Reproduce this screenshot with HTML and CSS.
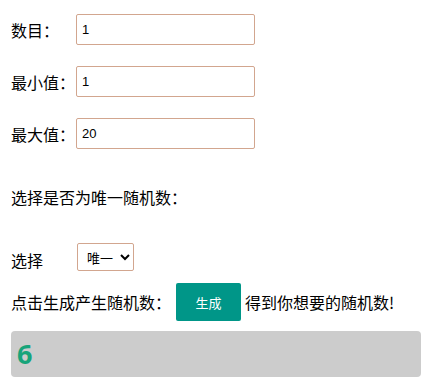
FILE: index.html
```html
<!DOCTYPE html>
<html lang="zh-CN">

<head>
    <meta charset="UTF-8">
    <meta name="viewport" content="width=device-width, initial-scale=1.0">
    <title>随机数生成</title>
    <link rel="stylesheet" href="styles.css">
</head>

<body>
    <div class="page">
        <div class="field">
            <label for="num">数目：</label>
            <input type="text" id="num" value="1">
        </div>
        <div class="field">
            <label for="min">最小值：</label>
            <input type="text" id="min" value="1">
        </div>
        <div class="field">
            <label for="max">最大值：</label>
            <input type="text" id="max" value="20">
        </div>

        <p class="hint">选择是否为唯一随机数：</p>

        <div class="field pick">
            <label for="only">选择</label>
            <select id="only">
                <option value="1">唯一</option>
                <option value="0">不唯一</option>
            </select>
        </div>

        <div class="action">
            <span>点击生成产生随机数：</span>
            <button id="make">生成</button>
            <span>得到你想要的随机数!</span>
        </div>

        <div class="result">6</div>
    </div>
</body>

</html>
```

FILE: styles.css
```css
body {
    margin: 0px;
    background: white;
    color: #000;
    font-family: "Noto Sans CJK SC", "Liberation Sans", sans-serif;
    font-size: 16px;
}

.page {
    padding: 14px 8px 0px 11px;
}

.field {
    display: flex;
    align-items: center;
    margin-bottom: 21px;
}

.field label {
    width: 65px;
    line-height: 22px;
}

.field input {
    box-sizing: border-box;
    width: 179px;
    height: 31px;
    padding: 0px 5px;
    border: 1px solid #d2a68f;
    border-radius: 2px;
    font-family: "Liberation Sans", Arial, sans-serif;
    font-size: 13px;
    outline: none;
}

.hint {
    margin: 37px 0px 35px 0px;
    line-height: 22px;
}

.pick {
    margin-bottom: 12px;
}

.pick label {
    width: 66px;
    padding-top: 5px;
}

.pick select {
    box-sizing: border-box;
    height: 28px;
    width: 57px;
    padding: 0px 2px 0px 5px;
    border: 1px solid #d2a68f;
    border-radius: 2px;
    background: white;
    font-family: "Noto Sans CJK SC", sans-serif;
    font-size: 13px;
}

.action {
    display: flex;
    align-items: center;
    line-height: 22px;
}

.action button {
    width: 65px;
    height: 38px;
    margin: 0px 4px 0px 5px;
    border: none;
    border-radius: 2px;
    background: #009688;
    color: white;
    font-family: "Noto Sans CJK SC", sans-serif;
    font-size: 13px;
    cursor: pointer;
}

.result {
    box-sizing: border-box;
    height: 46px;
    margin-top: 10px;
    padding: 0px 6px;
    background: #cccccc;
    border-radius: 4px;
    color: #17a47a;
    font-family: "Open Sans", sans-serif;
    font-weight: bold;
    font-size: 27px;
    line-height: 46px;
}
```
